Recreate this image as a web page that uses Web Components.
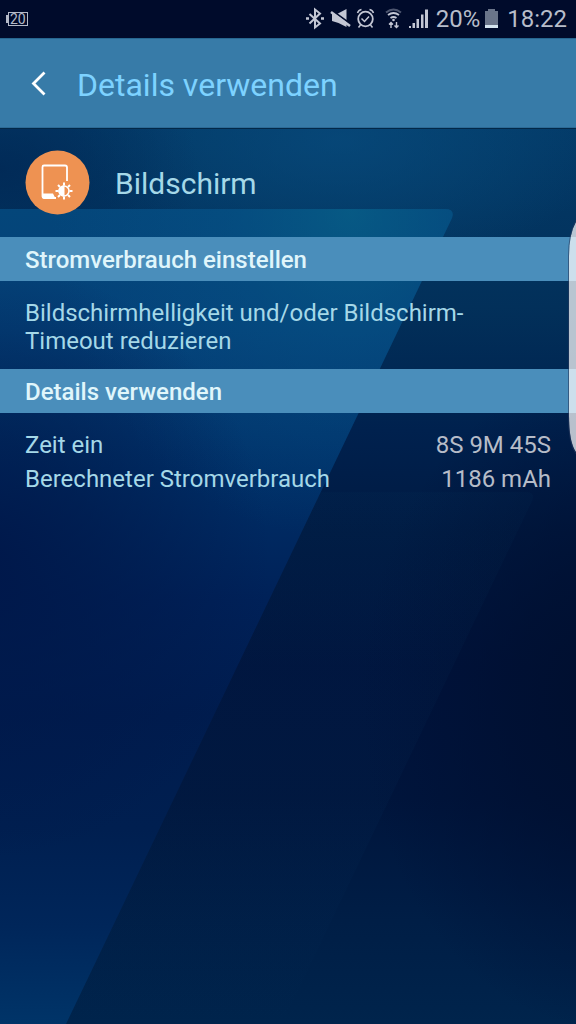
<!DOCTYPE html>
<html lang="de">
<head>
<meta charset="utf-8">
<meta name="viewport" content="width=device-width, initial-scale=1">
<title>Details verwenden</title>
<style>
  html, body { margin: 0; height: 100%; }
  body { background: #001a40; font-family: Roboto, "Noto Sans", sans-serif; }
</style>
</head>
<body>
<usage-screen></usage-screen>
<script>
const define = (name, html, setup) => {
  const template = document.createElement('template');
  template.innerHTML = html;
  customElements.define(name, class extends HTMLElement {
    constructor() {
      super();
      this.attachShadow({ mode: 'open' }).append(template.content.cloneNode(true));
    }
    connectedCallback() { if (setup) setup(this, this.shadowRoot); }
  });
};

/* Wallpaper: slanted translucent sheets over a deep blue glow */
define('wall-paper', `
<style>
  :host { display: block; overflow: hidden; contain: size; }
  svg { display: block; width: 100%; height: 100%; }
</style>
<svg viewBox="0 0 576 1024" preserveAspectRatio="none" aria-hidden="true">
  <defs>
    <linearGradient id="base" x1="0" y1="0" x2="0" y2="1">
      <stop offset="0.12" stop-color="#033a68"/><stop offset="0.3" stop-color="#02305a"/>
      <stop offset="0.42" stop-color="#00214e"/><stop offset="0.52" stop-color="#001a42"/>
      <stop offset="0.65" stop-color="#00133c"/><stop offset="0.78" stop-color="#00153c"/>
      <stop offset="0.9" stop-color="#001e46"/><stop offset="1" stop-color="#00244c"/>
    </linearGradient>
    <radialGradient id="glow" gradientUnits="userSpaceOnUse" cx="0" cy="0" r="1" gradientTransform="translate(340 140) scale(270 130)">
      <stop offset="0" stop-color="#084c7e" stop-opacity=".7"/><stop offset="1" stop-color="#085080" stop-opacity="0"/>
    </radialGradient>
    <radialGradient id="shade" gradientUnits="userSpaceOnUse" cx="0" cy="0" r="1" gradientTransform="translate(610 700) scale(250 330)">
      <stop offset="0" stop-color="#000f2e"/><stop offset=".4" stop-color="#000f30" stop-opacity=".7"/><stop offset="1" stop-color="#000f34" stop-opacity="0"/>
    </radialGradient>
    <radialGradient id="corner" gradientUnits="userSpaceOnUse" cx="0" cy="0" r="1" gradientTransform="translate(0 170) scale(200 130)">
      <stop offset="0" stop-color="#002552" stop-opacity=".7"/><stop offset="1" stop-color="#002552" stop-opacity="0"/>
    </radialGradient>
    <linearGradient id="sheet" x1="0" y1="0" x2="0" y2="1">
      <stop offset="0" stop-color="#04467a"/><stop offset=".15" stop-color="#044078"/>
      <stop offset=".32" stop-color="#003068"/><stop offset=".48" stop-color="#002158"/>
      <stop offset=".62" stop-color="#001c4e"/><stop offset=".76" stop-color="#001f50"/>
      <stop offset=".88" stop-color="#00265a"/><stop offset="1" stop-color="#003468"/>
    </linearGradient>
    <radialGradient id="sheetGlow" gradientUnits="userSpaceOnUse" cx="0" cy="0" r="1" gradientTransform="translate(350 210) scale(300 330)">
      <stop offset="0" stop-color="#08648a" stop-opacity=".65"/><stop offset=".4" stop-color="#065486" stop-opacity=".45"/><stop offset="1" stop-color="#065086" stop-opacity="0"/>
    </radialGradient>
    <radialGradient id="sheetShade" gradientUnits="userSpaceOnUse" cx="0" cy="0" r="1" gradientTransform="translate(-20 560) scale(290 300)">
      <stop offset="0" stop-color="#001648" stop-opacity=".9"/><stop offset=".4" stop-color="#001748" stop-opacity=".6"/><stop offset="1" stop-color="#001648" stop-opacity="0"/>
    </radialGradient>
    <linearGradient id="second" x1="0" y1="0" x2="0" y2="1">
      <stop offset="0" stop-color="#0a4a70" stop-opacity=".06"/><stop offset=".6" stop-color="#0a4070" stop-opacity=".08"/><stop offset="1" stop-color="#0a4070" stop-opacity="0"/>
    </linearGradient>
  </defs>
  <rect width="576" height="1024" fill="url(#base)"/>
  <rect width="576" height="1024" fill="url(#glow)"/>
  <rect width="576" height="1024" fill="url(#corner)"/>
  <rect width="576" height="1024" fill="url(#shade)"/>
  <path d="M0 492H526Q536 492 532 501L282 1024H0Z" fill="url(#second)"/>
  <path d="M0 209H445Q455 209 452 218L66 1024H0Z" fill="url(#sheet)"/>
  <path d="M0 209H445Q455 209 452 218L66 1024H0Z" fill="url(#sheetGlow)"/>
  <path d="M0 209H445Q455 209 452 218L66 1024H0Z" fill="url(#sheetShade)"/>
</svg>`);

define('battery-badge', `
<style>
  :host { display: flex; align-items: center; color: #b4bac8; }
  i { width: 2px; height: 8px; background: #b4bac8; }
  span { border: 1px solid; padding: 0 1px; font-size: 14px; line-height: 12px; }
</style>
<i></i><span><slot></slot></span>`);

define('status-bar', `
<style>
  :host { display: flex; align-items: center; justify-content: space-between; height: 38px; padding: 0 9px 0 6px; background: #000b2b; color: #b7bdca; font-size: 24px; line-height: 38px; }
  .right { display: flex; align-items: center; }
  svg { display: block; fill: none; stroke: #c3c7d4; flex: none; }
  .charge { margin-left: 6px; }
  .level { margin: 0 9px 0 5px; }
</style>
<battery-badge>20</battery-badge>
<div class="right">
  <svg width="128" height="38" viewBox="302 0 128 38" role="img" aria-label="Bluetooth, stumm, Wecker, WLAN, Signal">
    <path d="M309.500 14L320 23.500L315 27.500V9.500L320 13.500L309.500 23.500" stroke-width="2"/>
    <path d="M306 18.500h3M321 18.500h3" stroke-width="2.500"/>
    <path d="M332 14h5L346.500 9v18l-8-4-6.500-2z" fill="#c3c7d4" stroke="none"/>
    <path d="M332 10.500L352 25" stroke="#000b2b" stroke-width="2"/>
    <path d="M331 12L350 26" stroke-width="2.600"/>
    <circle cx="365.500" cy="19" r="7.300" stroke-width="1.800"/>
    <path d="M361.500 18.500l3 3 4.500-5M357.500 13q1-3 4-3.500M373.500 13q-1-3-4-3.500M360.500 25l-2 2.500M370.500 25l2 2.500" stroke-width="1.500"/>
    <path d="M386 12.500q7.500-6 15 0" stroke="#4d566f" stroke-width="2"/>
    <path d="M388 15q5.500-4 11 0M390.500 18q3-2 6 0" stroke-width="1.800"/>
    <circle cx="393.500" cy="20" r="1.300" fill="#c3c7d4" stroke="none"/>
    <path d="M391 28v-5M389 24.500l2-2 2 2M396.500 22v5M394.500 25.500l2 2 2-2" stroke-width="1.400"/>
    <path d="M409 28v-2h2v2zM412.500 28v-5h2.500v5zM416.500 28V19h2.500v9zM421 28V14.500h2.500V28zM425 28V9.500h3V28z" fill="#c3c7d4" stroke="none"/>
  </svg>
  <span class="charge">20%</span>
  <svg class="level" width="13" height="38" viewBox="0 0 13 38" role="img" aria-label="Akku">
    <path d="M0 11h3V9h7v2h3v14H0z" fill="#6a758a" stroke="none"/><path d="M0 25h13v3H0z" fill="#d5e5f0" stroke="none"/>
  </svg>
  <time>18:22</time>
</div>`);

define('title-bar', `
<style>
  :host { display: flex; align-items: center; height: 90px; border-top: 1px solid #266791; box-sizing: border-box; background: #377ba8; box-shadow: inset 0 -1px 0 #2c6a96, 0 1px 0 #022848; }
  button { width: 77px; height: 88px; padding: 0 2px 0 0; border: 0; background: none; display: grid; place-items: center; }
  h1 { margin: 0; padding-top: 2px; font-size: 32px; line-height: 40px; font-weight: 400; color: #7dd2ff; }
</style>
<button type="button" aria-label="Zurück"><svg width="16" height="26" viewBox="0 0 16 26" fill="none" stroke="#fff" stroke-width="2.800"><path d="M14.500 1.500L3.500 12.500L14.500 23.500"/></svg></button>
<h1><slot></slot></h1>`);

define('item-heading', `
<style>
  :host { display: flex; align-items: center; gap: 25px; padding: 22px 25px; }
  svg { display: block; flex: none; }
  h2 { margin: 0; padding-top: 2px; font-size: 30px; line-height: 40px; font-weight: 400; color: #a5d8e8; }
</style>
<svg width="65" height="65" viewBox="0 0 65 65" aria-hidden="true">
  <circle cx="32.500" cy="32.500" r="32" fill="#ee9252"/>
  <path d="M31 48H19Q17.500 48 17.500 46.500V17Q17.500 15.500 19 15.500H40Q42 15.500 42 17.500V31" fill="none" stroke="#fff" stroke-width="1.800"/>
  <path d="M18 43.500H28L30.500 48.500H18z" fill="#fff"/>
  <circle cx="39" cy="41" r="5" fill="none" stroke="#fff" stroke-width="1.600"/>
  <path d="M39 36a5 5 0 0 0 0 10z" fill="#fff" stroke="#fff"/>
  <path d="M39 32.500v3M39 46.500v3M30.500 41h3M44.500 41h3M33 35l2 2M43 45l2 2M33 47l2-2M43 37l2-2" stroke="#fff" stroke-width="2"/>
</svg>
<h2><slot></slot></h2>`);

define('section-bar', `
<style>
  :host { display: block; padding: 9px 25px 7px; background: #4a8ebb; }
  h3 { margin: 0; font-size: 24px; line-height: 28px; font-weight: 500; color: #e0f6fb; }
</style>
<h3><slot></slot></h3>`);

define('hint-text', `
<style>
  :host { display: block; padding: 18px 25px 14px; }
  p { margin: 0; max-width: 480px; font-size: 24px; line-height: 28px; color: #a5d8e8; }
</style>
<p><slot></slot></p>`);

define('usage-table', `
<style>
  :host { display: block; padding: 15px 25px; }
  table { width: 100%; border-collapse: collapse; font-size: 24px; line-height: 34px; }
  th, td { padding: 0; font-weight: 400; text-align: left; color: #a5d8e8; }
  td { text-align: right; color: #b6bcc8; }
</style>
<table><tbody></tbody></table>`, (host, root) => {
  const body = root.querySelector('tbody');
  body.replaceChildren();
  for (const [label, value] of JSON.parse(host.getAttribute('rows'))) {
    const row = body.insertRow();
    const head = document.createElement('th');
    head.scope = 'row';
    head.textContent = label;
    row.append(head);
    row.insertCell().textContent = value;
  }
});

/* Pull-out handle of the edge panel, floating at the right border */
define('edge-handle', `
<style>
  :host { display: block; position: absolute; right: 0; top: 214px; width: 8px; height: 242px; overflow: hidden; }
  svg { display: block; }
</style>
<svg width="8" height="242" viewBox="0 0 8 242" aria-hidden="true">
  <path d="M8 8Q1 20 1 42V202Q1 228 8 238Z" fill="#fff" fill-opacity=".72"/>
  <path d="M8 6Q.5 20 .5 42V202Q.5 230 8 240" fill="none" stroke="#26395e" stroke-opacity=".6"/>
</svg>`);

define('usage-screen', `
<style>
  :host { display: grid; position: relative; min-height: 100%; }
  wall-paper, .content { grid-area: 1 / 1; min-width: 0; }
  .content { position: relative; }
</style>
<wall-paper></wall-paper>
<div class="content">
  <status-bar></status-bar>
  <title-bar>Details verwenden</title-bar>
  <main>
    <item-heading>Bildschirm</item-heading>
    <section-bar>Stromverbrauch einstellen</section-bar>
    <hint-text>Bildschirmhelligkeit und/oder Bildschirm-Timeout reduzieren</hint-text>
    <section-bar>Details verwenden</section-bar>
    <usage-table rows='[["Zeit ein","8S 9M 45S"],["Berechneter Stromverbrauch","1186 mAh"]]'></usage-table>
  </main>
</div>
<edge-handle></edge-handle>`);
</script>
</body>
</html>
